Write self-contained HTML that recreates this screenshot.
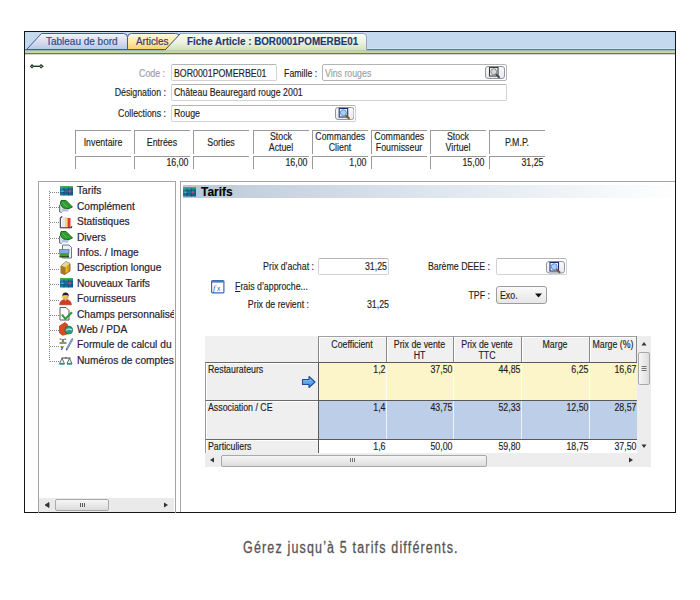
<!DOCTYPE html>
<html><head><meta charset="utf-8">
<style>
html,body{margin:0;padding:0;}
body{width:700px;height:600px;background:#fff;position:relative;overflow:hidden;font-family:"Liberation Sans",sans-serif;color:#1e1e1e;}
.a{position:absolute;}
.t{position:absolute;font-size:10px;line-height:12px;white-space:nowrap;transform:scaleX(.88);transform-origin:0 50%;-webkit-text-stroke:0.15px currentColor;}
.r{text-align:right;transform-origin:100% 50%;}
.c{text-align:center;transform-origin:50% 50%;}
.inp{position:absolute;box-sizing:border-box;border:1px solid #d2d2d2;border-top-color:#b4b4b4;border-radius:2px;background:#fff;}
.sb{position:absolute;box-sizing:border-box;border:1px solid #a9b6c9;border-radius:2px;background:linear-gradient(#f4f7fb,#dde5ef);}
.hc{position:absolute;box-sizing:border-box;border-top:1px solid #9a9a9a;border-left:1px solid #9a9a9a;}
.tree{position:absolute;font-size:10.5px;line-height:12px;white-space:nowrap;color:#2a2230;-webkit-text-stroke:0.2px #2a2230;transform:scaleX(.97);transform-origin:0 50%;}
</style></head><body>

<!-- frame -->
<div class="a" style="left:24px;top:31px;width:652px;height:482px;box-sizing:border-box;border:1px solid #141414;"></div>

<!-- tab bar -->
<div class="a" style="left:25px;top:32px;width:650px;height:17px;background:#c5d9ee;"></div>
<div class="a" style="left:25px;top:48px;width:650px;height:1px;background:#cce2f6;"></div>
<div class="a" style="left:25px;top:49px;width:650px;height:1px;background:#5f7d98;"></div>
<div class="a" style="left:25px;top:50px;width:650px;height:1px;background:#9fb4b4;"></div>
<div class="a" style="left:25px;top:51px;width:650px;height:2px;background:#c4d898;"></div>
<div class="a" style="left:25px;top:53px;width:650px;height:1px;background:#717171;"></div>
<div class="a" style="left:25px;top:54px;width:650px;height:1px;background:#d4d4d4;"></div>


<!-- tabs -->
<svg class="a" style="left:0;top:0" width="700" height="60">
<defs>
<linearGradient id="g1" x1="0" y1="0" x2="0" y2="1"><stop offset="0" stop-color="#f3f4fb"/><stop offset="0.5" stop-color="#dcdcef"/><stop offset="1" stop-color="#b4c8e6"/></linearGradient>
<linearGradient id="g2" x1="0" y1="0" x2="0" y2="1"><stop offset="0" stop-color="#fdf8e2"/><stop offset="0.55" stop-color="#fbe9a6"/><stop offset="1" stop-color="#f7d264"/></linearGradient>
<linearGradient id="g3" x1="0" y1="0" x2="0" y2="1"><stop offset="0" stop-color="#fbfbf6"/><stop offset="0.5" stop-color="#eef2e4"/><stop offset="1" stop-color="#d2e1b0"/></linearGradient>
</defs>
<path d="M127.5,49.5 V37.5 Q127.5,33.5 131.5,33.5 H175.5 Q178,33.5 180,35.5 L185,49.5 Z" fill="url(#g2)" stroke="#3c5ca0" stroke-width="1"/>
<path d="M26.5,49.5 L41.5,33.5 H123.5 Q127.5,33.5 127.5,37.5 V49.5 Z" fill="url(#g1)" stroke="#3c5ca0" stroke-width="1"/>
<path d="M164,50.5 L180.5,33.5 H363 Q366.5,33.5 366.5,37 V50.5 Z" fill="url(#g3)"/>
<path d="M180.5,33.5 H363 Q366.5,33.5 366.5,37 V49.5" stroke="#93a5c2" stroke-width="1" fill="none"/>
<path d="M165,50 L180.5,33.5" stroke="#3e5070" stroke-width="1" fill="none"/>
</svg>
<div class="t" style="left:46px;top:35.1px;font-size:10.5px;transform:scaleX(.95);color:#2d4c8e;-webkit-text-stroke:0.2px #2d4c8e;">Tableau de bord</div>
<div class="t" style="left:136px;top:35.1px;font-size:10.5px;transform:scaleX(.945);color:#3c3a6c;-webkit-text-stroke:0.2px #3c3a6c;">Articles</div>
<div class="t" style="left:186.5px;top:36.3px;font-weight:bold;transform:scaleX(.98);color:#1d3a70;">Fiche Article : BOR0001POMERBE01</div>

<!-- key icon -->
<svg class="a" style="left:29px;top:63px" width="16" height="7"><path d="M1.5,3.3 L3,1.8 L4.5,3.3 L3,4.8 Z" fill="#cfe0cf" stroke="#1e3a24" stroke-width="1.1"/><path d="M4.5,3.3 H10.5" stroke="#1e3a24" stroke-width="1.4"/><path d="M10.5,3.3 L12,1.8 L14,3.3 L12,4.8 Z" fill="#cfe0cf" stroke="#1e3a24" stroke-width="1.1"/></svg>

<!-- form -->
<div class="t r" style="left:100px;width:65px;top:67.5px;color:#9a9a9a;">Code :</div>
<div class="inp" style="left:171px;top:64px;width:106px;height:17px;"></div>
<div class="t" style="left:173.5px;top:67.5px;">BOR0001POMERBE01</div>
<div class="t" style="left:284px;top:67.5px;">Famille :</div>
<div class="inp" style="left:322px;top:64px;width:185px;height:17px;border-color:#b4b4b4;"></div>
<div class="t" style="left:325px;top:67.5px;color:#a0a0a0;">Vins rouges</div>
<svg class="a" style="left:485px;top:66px" width="20" height="13"><defs><linearGradient id="sbg485" x1="0" y1="0" x2="0" y2="1"><stop offset="0" stop-color="#fafafa"/><stop offset="1" stop-color="#e4e8ee"/></linearGradient></defs><rect x="0.5" y="0.5" width="19" height="12" rx="2.5" fill="url(#sbg485)" stroke="#8e96a4"/><rect x="4.5" y="1.5" width="8.5" height="8.5" fill="#fff" stroke="#3a3a3a" stroke-width="1.1"/><circle cx="8.7" cy="5.7" r="3" fill="#d8d8d8" stroke="#7a7a7a" stroke-width="0.9"/><path d="M11.5,8.6 L14.0,11.2" stroke="#4a4a4a" stroke-width="2" stroke-linecap="round"/></svg>

<div class="t r" style="left:100px;width:66px;top:87px;">Désignation :</div>
<div class="inp" style="left:171px;top:84px;width:336px;height:17px;"></div>
<div class="t" style="left:173.5px;top:87px;">Château Beauregard rouge 2001</div>

<div class="t r" style="left:100px;width:66px;top:108px;">Collections :</div>
<div class="inp" style="left:171px;top:105px;width:185px;height:17px;"></div>
<div class="t" style="left:173.5px;top:108px;">Rouge</div>
<svg class="a" style="left:334.5px;top:107px" width="19.5" height="13"><defs><linearGradient id="sbg334" x1="0" y1="0" x2="0" y2="1"><stop offset="0" stop-color="#fafafa"/><stop offset="1" stop-color="#e4e8ee"/></linearGradient></defs><rect x="0.5" y="0.5" width="18.5" height="12" rx="2.5" fill="url(#sbg334)" stroke="#8e96a4"/><rect x="4.2" y="1.5" width="8.5" height="8.5" fill="#fff" stroke="#1f2a70" stroke-width="1.1"/><circle cx="8.4" cy="5.7" r="3" fill="#a6d4ee" stroke="#4f86c6" stroke-width="0.9"/><path d="M11.2,8.6 L13.8,11.2" stroke="#7a5a18" stroke-width="2" stroke-linecap="round"/></svg>

<!-- stock grid -->
<div class="hc" style="left:75px;top:130px;width:56px;height:24px;"></div>
<div class="hc" style="left:75px;top:156px;width:56px;height:13px;"></div>
<div class="t c" style="left:75px;width:56px;top:136.5px;">Inventaire</div>
<div class="hc" style="left:134px;top:130px;width:56px;height:24px;"></div>
<div class="hc" style="left:134px;top:156px;width:56px;height:13px;"></div>
<div class="t c" style="left:134px;width:56px;top:136.5px;">Entrées</div>
<div class="t r" style="left:134px;width:54.5px;top:156.8px;">16,00</div>
<div class="hc" style="left:193px;top:130px;width:56px;height:24px;"></div>
<div class="hc" style="left:193px;top:156px;width:56px;height:13px;"></div>
<div class="t c" style="left:193px;width:56px;top:136.5px;">Sorties</div>
<div class="hc" style="left:252.5px;top:130px;width:56px;height:24px;"></div>
<div class="hc" style="left:252.5px;top:156px;width:56px;height:13px;"></div>
<div class="t c" style="left:252.5px;width:56px;top:130.7px;line-height:11px;">Stock<br>Actuel</div>
<div class="t r" style="left:252.5px;width:54.5px;top:156.8px;">16,00</div>
<div class="hc" style="left:311.5px;top:130px;width:56px;height:24px;"></div>
<div class="hc" style="left:311.5px;top:156px;width:56px;height:13px;"></div>
<div class="t c" style="left:311.5px;width:56px;top:130.7px;line-height:11px;">Commandes<br>Client</div>
<div class="t r" style="left:311.5px;width:54.5px;top:156.8px;">1,00</div>
<div class="hc" style="left:371px;top:130px;width:56px;height:24px;"></div>
<div class="hc" style="left:371px;top:156px;width:56px;height:13px;"></div>
<div class="t c" style="left:371px;width:56px;top:130.7px;line-height:11px;">Commandes<br>Fournisseur</div>
<div class="hc" style="left:430px;top:130px;width:56px;height:24px;"></div>
<div class="hc" style="left:430px;top:156px;width:56px;height:13px;"></div>
<div class="t c" style="left:430px;width:56px;top:130.7px;line-height:11px;">Stock<br>Virtuel</div>
<div class="t r" style="left:430px;width:54.5px;top:156.8px;">15,00</div>
<div class="hc" style="left:489px;top:130px;width:56px;height:24px;"></div>
<div class="hc" style="left:489px;top:156px;width:56px;height:13px;"></div>
<div class="t c" style="left:489px;width:56px;top:136.5px;">P.M.P.</div>
<div class="t r" style="left:489px;width:54.5px;top:156.8px;">31,25</div>
<!-- tree panel -->
<div class="a" style="left:38px;top:181px;width:138px;height:332px;box-sizing:border-box;border:1px solid #a4a4a4;border-bottom:none;"></div>
<svg class="a" style="left:0;top:0" width="200" height="380">
<path d="M49.5,191 V361.5" stroke="#858585" stroke-width="1" stroke-dasharray="1,1" fill="none"/>
<path d="M50,192.5 H59" stroke="#858585" stroke-width="1" stroke-dasharray="1,1" fill="none"/>
<path d="M50,207.5 H59" stroke="#858585" stroke-width="1" stroke-dasharray="1,1" fill="none"/>
<path d="M50,222.5 H59" stroke="#858585" stroke-width="1" stroke-dasharray="1,1" fill="none"/>
<path d="M50,238.5 H59" stroke="#858585" stroke-width="1" stroke-dasharray="1,1" fill="none"/>
<path d="M50,253.5 H59" stroke="#858585" stroke-width="1" stroke-dasharray="1,1" fill="none"/>
<path d="M50,269.5 H59" stroke="#858585" stroke-width="1" stroke-dasharray="1,1" fill="none"/>
<path d="M50,284.5 H59" stroke="#858585" stroke-width="1" stroke-dasharray="1,1" fill="none"/>
<path d="M50,300.5 H59" stroke="#858585" stroke-width="1" stroke-dasharray="1,1" fill="none"/>
<path d="M50,315.5 H59" stroke="#858585" stroke-width="1" stroke-dasharray="1,1" fill="none"/>
<path d="M50,330.5 H59" stroke="#858585" stroke-width="1" stroke-dasharray="1,1" fill="none"/>
<path d="M50,346.5 H59" stroke="#858585" stroke-width="1" stroke-dasharray="1,1" fill="none"/>
<path d="M50,361.5 H59" stroke="#858585" stroke-width="1" stroke-dasharray="1,1" fill="none"/>
</svg>
<div class="a" style="left:39px;top:182px;width:135px;height:316px;overflow:hidden;">
<div class="tree" style="left:37.8px;top:2.36px;">Tarifs</div>
<div class="tree" style="left:37.8px;top:17.76px;">Complément</div>
<div class="tree" style="left:37.8px;top:33.16px;">Statistiques</div>
<div class="tree" style="left:37.8px;top:48.56px;">Divers</div>
<div class="tree" style="left:37.8px;top:63.96px;">Infos. / Image</div>
<div class="tree" style="left:37.8px;top:79.36px;">Description longue</div>
<div class="tree" style="left:37.8px;top:94.76px;">Nouveaux Tarifs</div>
<div class="tree" style="left:37.8px;top:110.16px;">Fournisseurs</div>
<div class="tree" style="left:37.8px;top:125.56px;">Champs personnalisé</div>
<div class="tree" style="left:37.8px;top:140.96px;">Web / PDA</div>
<div class="tree" style="left:37.8px;top:156.36px;">Formule de calcul du</div>
<div class="tree" style="left:37.8px;top:171.76px;">Numéros de comptes</div>
</div>
<div class="a" style="left:39px;top:498px;width:135px;height:14px;background:#eaeaea;"></div>
<div class="a" style="left:55px;top:499px;width:54px;height:12px;box-sizing:border-box;border:1px solid #a8a8a8;border-radius:2px;background:linear-gradient(#f6f6f6,#dcdcdc);"></div>
<svg class="a" style="left:39px;top:498px" width="135" height="14"><path d="M6,7 L10,4.5 V9.5 Z M41.5,5 V9 M43.5,5 V9 M45.5,5 V9" fill="#333" stroke="#333" stroke-width="0.8"/><path d="M129,7 L125,4.5 V9.5 Z" fill="#333"/></svg>
<!-- tarifs panel -->
<div class="a" style="left:180px;top:181px;width:495px;height:331px;box-sizing:border-box;border-top:1px solid #a4a4a4;border-left:1px solid #a4a4a4;"></div>
<div class="a" style="left:183px;top:185px;width:492px;height:13px;background:linear-gradient(90deg,#b7c5d6 0%,#c4d0dd 13%,#d9e2ec 44%,#eef2f6 75%,#fefefe 100%);"></div>
<div class="t" style="left:201px;top:184.3px;font-size:12.8px;line-height:15px;font-weight:bold;color:#000;transform:scaleX(.93);">Tarifs</div>
<!-- tarifs form -->
<div class="t r" style="left:194px;width:120px;top:260.53px;">Prix d’achat :</div>
<div class="inp" style="left:318px;top:258px;width:71px;height:17px;"></div>
<div class="t r" style="left:266.5px;width:120px;top:260.53px;">31,25</div>
<div class="t" style="left:235px;top:281.13px;"><u>F</u>rais d’approche...</div>
<div class="t r" style="left:188.5px;width:120px;top:298.73px;">Prix de revient :</div>
<div class="t r" style="left:269px;width:120px;top:298.73px;">31,25</div>
<div class="t r" style="left:370px;width:120px;top:260.53px;">Barème DEEE :</div>
<div class="inp" style="left:496px;top:258px;width:71px;height:17px;"></div>
<svg class="a" style="left:546px;top:261px" width="19" height="12.5"><defs><linearGradient id="sbg546" x1="0" y1="0" x2="0" y2="1"><stop offset="0" stop-color="#fafafa"/><stop offset="1" stop-color="#e4e8ee"/></linearGradient></defs><rect x="0.5" y="0.5" width="18" height="11.5" rx="2.5" fill="url(#sbg546)" stroke="#8e96a4"/><rect x="4.0" y="1.5" width="8.5" height="8.5" fill="#fff" stroke="#1f2a70" stroke-width="1.1"/><circle cx="8.2" cy="5.7" r="3" fill="#a6d4ee" stroke="#4f86c6" stroke-width="0.9"/><path d="M11.0,8.6 L13.5,11.2" stroke="#7a5a18" stroke-width="2" stroke-linecap="round"/></svg>
<div class="t r" style="left:370px;width:120px;top:290px;">TPF :</div>
<div class="a" style="left:496px;top:285.5px;width:51px;height:18px;box-sizing:border-box;border:1px solid #9c9c9c;border-radius:3px;background:linear-gradient(#fafafa,#e6e6e6);"></div>
<div class="t" style="left:500px;top:290px;">Exo.</div>
<svg class="a" style="left:533px;top:291.5px" width="12" height="8"><path d="M2,1.5 H9 L5.5,5.5 Z" fill="#111"/></svg>
<!-- table -->
<div class="a" style="left:205px;top:336px;width:432px;height:117px;background:#f0f0f0;overflow:hidden;">
<div class="a" style="left:113px;top:0;width:68px;height:26px;box-sizing:border-box;border-left:1px solid #8a8a8a;border-top:1px solid #a0a0a0;background:#f0f0f0;box-shadow:inset 1px 1px #fff;"></div>
<div class="t c" style="left:113px;width:68px;top:2.5px;line-height:11px;">Coefficient</div>
<div class="a" style="left:181px;top:0;width:67px;height:26px;box-sizing:border-box;border-left:1px solid #8a8a8a;border-top:1px solid #a0a0a0;background:#f0f0f0;box-shadow:inset 1px 1px #fff;"></div>
<div class="t c" style="left:181px;width:67px;top:2.5px;line-height:11px;">Prix de vente<br>HT</div>
<div class="a" style="left:248px;top:0;width:68px;height:26px;box-sizing:border-box;border-left:1px solid #8a8a8a;border-top:1px solid #a0a0a0;background:#f0f0f0;box-shadow:inset 1px 1px #fff;"></div>
<div class="t c" style="left:248px;width:68px;top:2.5px;line-height:11px;">Prix de vente<br>TTC</div>
<div class="a" style="left:316px;top:0;width:68px;height:26px;box-sizing:border-box;border-left:1px solid #8a8a8a;border-top:1px solid #a0a0a0;background:#f0f0f0;box-shadow:inset 1px 1px #fff;"></div>
<div class="t c" style="left:316px;width:68px;top:2.5px;line-height:11px;">Marge</div>
<div class="a" style="left:384px;top:0;width:48px;height:26px;box-sizing:border-box;border-left:1px solid #8a8a8a;border-top:1px solid #a0a0a0;background:#f0f0f0;box-shadow:inset 1px 1px #fff;"></div>
<div class="t c" style="left:384px;width:48px;top:2.5px;line-height:11px;">Marge (%)</div>
<div class="a" style="left:0;top:26px;width:114px;height:38px;box-sizing:border-box;border-top:1px solid #6a6a6a;border-left:1px solid #9a9a9a;background:#efefef;box-shadow:inset 1px 1px #fff;"></div>
<div class="t" style="left:3px;top:27.8px;">Restaurateurs</div>
<div class="a" style="left:113px;top:26px;width:319px;height:38px;box-sizing:border-box;border-top:1px solid #5a5a5a;border-left:1px solid #5a5a5a;background:#fcf5c9;"></div>
<div class="t r" style="left:113px;width:67.5px;top:27.8px;">1,2</div>
<div class="a" style="left:181px;top:27px;width:1px;height:37px;background:rgba(255,255,255,.75);"></div>
<div class="t r" style="left:181px;width:66.5px;top:27.8px;">37,50</div>
<div class="a" style="left:248px;top:27px;width:1px;height:37px;background:rgba(255,255,255,.75);"></div>
<div class="t r" style="left:248px;width:67.5px;top:27.8px;">44,85</div>
<div class="a" style="left:316px;top:27px;width:1px;height:37px;background:rgba(255,255,255,.75);"></div>
<div class="t r" style="left:316px;width:67.5px;top:27.8px;">6,25</div>
<div class="a" style="left:384px;top:27px;width:1px;height:37px;background:rgba(255,255,255,.75);"></div>
<div class="t r" style="left:384px;width:47.5px;top:27.8px;">16,67</div>
<div class="a" style="left:0;top:64px;width:114px;height:39px;box-sizing:border-box;border-top:1px solid #6a6a6a;border-left:1px solid #9a9a9a;background:#efefef;box-shadow:inset 1px 1px #fff;"></div>
<div class="t" style="left:3px;top:65.8px;">Association / CE</div>
<div class="a" style="left:113px;top:64px;width:319px;height:39px;box-sizing:border-box;border-top:1px solid #5a5a5a;border-left:1px solid #5a5a5a;background:#bdcfe8;"></div>
<div class="t r" style="left:113px;width:67.5px;top:65.8px;">1,4</div>
<div class="a" style="left:181px;top:65px;width:1px;height:38px;background:rgba(255,255,255,.75);"></div>
<div class="t r" style="left:181px;width:66.5px;top:65.8px;">43,75</div>
<div class="a" style="left:248px;top:65px;width:1px;height:38px;background:rgba(255,255,255,.75);"></div>
<div class="t r" style="left:248px;width:67.5px;top:65.8px;">52,33</div>
<div class="a" style="left:316px;top:65px;width:1px;height:38px;background:rgba(255,255,255,.75);"></div>
<div class="t r" style="left:316px;width:67.5px;top:65.8px;">12,50</div>
<div class="a" style="left:384px;top:65px;width:1px;height:38px;background:rgba(255,255,255,.75);"></div>
<div class="t r" style="left:384px;width:47.5px;top:65.8px;">28,57</div>
<div class="a" style="left:0;top:103px;width:114px;height:20px;box-sizing:border-box;border-top:1px solid #6a6a6a;border-left:1px solid #9a9a9a;background:#efefef;box-shadow:inset 1px 1px #fff;"></div>
<div class="t" style="left:3px;top:104.8px;">Particuliers</div>
<div class="a" style="left:113px;top:103px;width:319px;height:20px;box-sizing:border-box;border-top:1px solid #5a5a5a;border-left:1px solid #5a5a5a;background:#ffffff;"></div>
<div class="t r" style="left:113px;width:67.5px;top:104.8px;">1,6</div>
<div class="a" style="left:181px;top:104px;width:1px;height:19px;background:rgba(255,255,255,.75);"></div>
<div class="t r" style="left:181px;width:66.5px;top:104.8px;">50,00</div>
<div class="a" style="left:248px;top:104px;width:1px;height:19px;background:rgba(255,255,255,.75);"></div>
<div class="t r" style="left:248px;width:67.5px;top:104.8px;">59,80</div>
<div class="a" style="left:316px;top:104px;width:1px;height:19px;background:rgba(255,255,255,.75);"></div>
<div class="t r" style="left:316px;width:67.5px;top:104.8px;">18,75</div>
<div class="a" style="left:384px;top:104px;width:1px;height:19px;background:rgba(255,255,255,.75);"></div>
<div class="t r" style="left:384px;width:47.5px;top:104.8px;">37,50</div>
<svg class="a" style="left:96px;top:39px" width="16" height="14"><defs><linearGradient id="arr" x1="0" y1="0" x2="0" y2="1"><stop offset="0" stop-color="#8cc8f4"/><stop offset="1" stop-color="#3a88d8"/></linearGradient></defs><path d="M1.5,4.5 H8 V1.5 L14,7 L8,12.5 V9.5 H1.5 Z" fill="url(#arr)" stroke="#1f4f9a" stroke-width="1.1" stroke-linejoin="round"/></svg>
</div>
<div class="a" style="left:637px;top:336px;width:14px;height:131px;background:#ededed;"></div>
<div class="a" style="left:636px;top:336px;width:1px;height:26px;background:#8a8a8a;"></div>
<div class="a" style="left:638px;top:351.5px;width:12px;height:33px;box-sizing:border-box;border:1px solid #a8a8a8;border-radius:2px;background:linear-gradient(90deg,#f6f6f6,#dcdcdc);"></div>
<svg class="a" style="left:637px;top:336px" width="14" height="131"><path d="M7,6 L4.5,9.5 H9.5 Z" fill="#333"/><path d="M7,112 L4.5,108.5 H9.5 Z" fill="#333"/><path d="M4.5,30.5 H9.5 M4.5,32.5 H9.5 M4.5,34.5 H9.5" stroke="#555" stroke-width="0.8"/></svg>
<div class="a" style="left:205px;top:453px;width:432px;height:14px;background:#ededed;"></div>
<div class="a" style="left:220.5px;top:454.5px;width:266px;height:12px;box-sizing:border-box;border:1px solid #a8a8a8;border-radius:2px;background:linear-gradient(#f6f6f6,#dcdcdc);"></div>
<svg class="a" style="left:205px;top:453px" width="433" height="14"><path d="M5,7 L9,4.5 V9.5 Z" fill="#333"/><path d="M428,7 L424,4.5 V9.5 Z" fill="#333"/><path d="M145.5,5 V9 M147.5,5 V9 M149.5,5 V9" stroke="#555" stroke-width="0.8"/></svg>
<!-- caption -->
<div class="a" style="left:243px;top:539.4px;font-size:16px;line-height:18px;color:#555;white-space:nowrap;letter-spacing:1.5px;-webkit-text-stroke:0.3px #555;transform:scaleX(.78);transform-origin:0 50%;">Gérez jusqu’à 5 tarifs différents.</div>
<!-- tree icons -->
<svg class="a" style="left:59px;top:184.7px;overflow:visible" width="14" height="14"><defs><linearGradient id="tg0" x1="0" y1="0" x2="1" y2="1"><stop offset="0" stop-color="#2a9cae"/><stop offset="1" stop-color="#11548a"/></linearGradient></defs>
<rect x="1" y="1" width="13" height="9.5" fill="url(#tg0)"/><rect x="1" y="1" width="13" height="1.5" fill="#46b04c"/>
<path d="M1,5 H14 M1,7.8 H14 M5,2.5 V10.5 M9.5,2.5 V10.5" stroke="#0d3f74" stroke-width="0.6"/><rect x="9.5" y="5" width="2.5" height="2.5" fill="#b84a7a"/><rect x="2.5" y="5.5" width="2" height="1.5" fill="#6ab0e8"/></svg>
<svg class="a" style="left:59px;top:200.1px;overflow:visible" width="14" height="14"><path d="M0.8,5 V12 M0.8,12 H3" stroke="#2a3a40" stroke-width="1"/><rect x="1.3" y="4.5" width="2.8" height="7.5" fill="#cfe0ea"/><path d="M3,9 H10 L9,11.5 H3 Z" fill="#b0c2de"/>
<path d="M2,0.6 L7,0.4 L13.5,7 L10,8.5 L4.5,8.2 L1.3,4.5 Z" fill="#2e9e30" stroke="#145a16" stroke-width="0.9" stroke-linejoin="round"/><path d="M3.5,2.5 L8.5,7.2" stroke="#5cc44a" stroke-width="1"/></svg>
<svg class="a" style="left:59px;top:215.5px;overflow:visible" width="14" height="14"><rect x="2.8" y="1" width="3" height="10.2" fill="#e8e4ee"/><rect x="5.8" y="1.3" width="2.7" height="10" fill="#f2d488"/><rect x="8.5" y="2" width="3" height="9.5" fill="#e23a2c"/>
<path d="M1.3,11.8 V2 L3.2,0.3" stroke="#3a3050" stroke-width="1.1" fill="none"/><path d="M1.3,11.8 H12.5 L12.8,10" stroke="#2a2020" stroke-width="1" fill="none"/></svg>
<svg class="a" style="left:59px;top:230.9px;overflow:visible" width="14" height="14"><path d="M0.8,5 V12 M0.8,12 H3" stroke="#2a3a40" stroke-width="1"/><rect x="1.3" y="4.5" width="2.8" height="7.5" fill="#cfe0ea"/><path d="M3,9 H10 L9,11.5 H3 Z" fill="#b0c2de"/>
<path d="M2,0.6 L7,0.4 L13.5,7 L10,8.5 L4.5,8.2 L1.3,4.5 Z" fill="#2e9e30" stroke="#145a16" stroke-width="0.9" stroke-linejoin="round"/><path d="M3.5,2.5 L8.5,7.2" stroke="#5cc44a" stroke-width="1"/></svg>
<svg class="a" style="left:59px;top:246.3px;overflow:visible" width="14" height="14"><path d="M3.5,-1 H10 L12.5,1.5 V12 H3.5 Z" fill="#eef2f8" stroke="#5a6a84" stroke-width="0.9"/><rect x="0.5" y="3.5" width="9.5" height="4.2" fill="#86acdc" stroke="#2a4a90" stroke-width="0.5"/><rect x="0.5" y="7.7" width="9.5" height="3.6" fill="#4a9a34"/><rect x="0.5" y="10.3" width="9.5" height="1" fill="#1a3a10"/></svg>
<svg class="a" style="left:59px;top:261.7px;overflow:visible" width="14" height="14"><path d="M2,3.8 L7,-0.3 L11,1.5 V9 L5.5,12.5 L2,11 Z" fill="#d8a020" stroke="#6a5210" stroke-width="0.8" stroke-linejoin="round"/><path d="M2,3.8 L7,-0.3 L11,1.5 L6,5.2 Z" fill="#d8dca0"/><path d="M6,5.2 V12.3" stroke="#8a6a18" stroke-width="0.7"/><path d="M2,3.8 L6,5.2 V12.3 L2,11 Z" fill="#a07a28"/><path d="M7.5,4 V10.5" stroke="#f4c020" stroke-width="1.4"/></svg>
<svg class="a" style="left:59px;top:277.1px;overflow:visible" width="14" height="14"><defs><linearGradient id="tg6" x1="0" y1="0" x2="1" y2="1"><stop offset="0" stop-color="#2a9cae"/><stop offset="1" stop-color="#11548a"/></linearGradient></defs>
<rect x="1" y="1" width="13" height="9.5" fill="url(#tg6)"/><rect x="1" y="1" width="13" height="1.5" fill="#46b04c"/>
<path d="M1,5 H14 M1,7.8 H14 M5,2.5 V10.5 M9.5,2.5 V10.5" stroke="#0d3f74" stroke-width="0.6"/><rect x="9.5" y="5" width="2.5" height="2.5" fill="#b84a7a"/><rect x="2.5" y="5.5" width="2" height="1.5" fill="#6ab0e8"/></svg>
<svg class="a" style="left:59px;top:292.5px;overflow:visible" width="14" height="14"><path d="M0.5,11.8 Q1,6.8 6.5,6.3 Q12,6.8 12.5,11.8 Z" fill="#d83c1c" stroke="#9a2a10" stroke-width="0.5"/><path d="M5.5,6.3 L6.5,8 L7.5,6.3 Z" fill="#f4f0e0"/><circle cx="6.5" cy="3.2" r="3.2" fill="#e8b070"/><path d="M3.2,3 Q3.5,-0.6 6.5,-0.6 Q9.8,-0.6 9.8,3 Q8,1.2 3.2,3 Z" fill="#1e1a3a"/><rect x="2.8" y="2.6" width="4.5" height="1.8" fill="#e8dc20"/></svg>
<svg class="a" style="left:59px;top:307.9px;overflow:visible" width="14" height="14"><path d="M1,-0.5 H7 L10,2.5 V12 H1 Z" fill="#fbfbfb" stroke="#4a4a4a" stroke-width="0.9"/><path d="M3,6.5 L6.3,11 L13,4.3" fill="none" stroke="#2f9a3a" stroke-width="2.1" stroke-linejoin="round"/></svg>
<svg class="a" style="left:59px;top:323.3px;overflow:visible" width="14" height="14"><path d="M0.5,3 L6,-0.5 L8.5,1.5 V11 L3.5,12.3 L0.5,10 Z" fill="#e04a1a" stroke="#9a2a10" stroke-width="0.6"/><circle cx="9.7" cy="7.1" r="4" fill="#2f9a6a" stroke="#1a5a50" stroke-width="0.6"/><path d="M7,7.5 Q9.5,5 13,7" stroke="#9ad0f0" stroke-width="1.5" fill="none"/></svg>
<svg class="a" style="left:59px;top:338.2px;overflow:visible" width="14" height="14"><text x="0.5" y="3.6" font-size="5" font-family="Liberation Sans" font-weight="bold" fill="#222">°x³</text><path d="M0.5,5 H7.5" stroke="#222" stroke-width="1"/><text x="1.5" y="11" font-size="5.5" font-family="Liberation Sans" font-weight="bold" fill="#222">y</text><path d="M7,11.5 L13,0.5 L14,1.2 L8,12 Z" fill="#bcd8f0" stroke="#3a5a8a" stroke-width="0.7"/><path d="M7,11.5 L7.3,12.6 L8,12" fill="#111"/></svg>
<svg class="a" style="left:59px;top:357.1px;overflow:visible" width="14" height="14"><path d="M2.5,1 H11.5 M7,0 V1.5" stroke="#333" stroke-width="0.9"/><path d="M0.5,6.5 L3,1.2 L5.5,6.5 Z" fill="#d8f0ee" stroke="#333" stroke-width="0.7"/><path d="M8,6.5 L10.5,1.2 L13,6.5 Z" fill="#d8f0ee" stroke="#333" stroke-width="0.7"/><path d="M0.5,7 H5.5 M8,7 H13" stroke="#1e9a9a" stroke-width="1.4"/></svg>
<svg class="a" style="left:182px;top:185.5px;overflow:visible" width="14" height="14"><defs><linearGradient id="tgh" x1="0" y1="0" x2="1" y2="1"><stop offset="0" stop-color="#2a9cae"/><stop offset="1" stop-color="#11548a"/></linearGradient></defs>
<rect x="1" y="1" width="13" height="9.5" fill="url(#tgh)"/><rect x="1" y="1" width="13" height="1.5" fill="#46b04c"/>
<path d="M1,5 H14 M1,7.8 H14 M5,2.5 V10.5 M9.5,2.5 V10.5" stroke="#0d3f74" stroke-width="0.6"/><rect x="9.5" y="5" width="2.5" height="2.5" fill="#b84a7a"/><rect x="2.5" y="5.5" width="2" height="1.5" fill="#6ab0e8"/></svg>
<svg class="a" style="left:211px;top:280px" width="14" height="14"><rect x="0.6" y="0.6" width="12.3" height="12.3" rx="1" fill="#fff" stroke="#3a6ab0" stroke-width="1.2"/><rect x="0.6" y="0.6" width="12.3" height="2" fill="#4a7ac0"/><text x="2" y="11" font-size="8.5" font-style="italic" font-family="Liberation Serif" fill="#2a5aa8">f</text><text x="6" y="11" font-size="6.5" font-family="Liberation Sans" fill="#2a5aa8">x</text></svg>
</body></html>
